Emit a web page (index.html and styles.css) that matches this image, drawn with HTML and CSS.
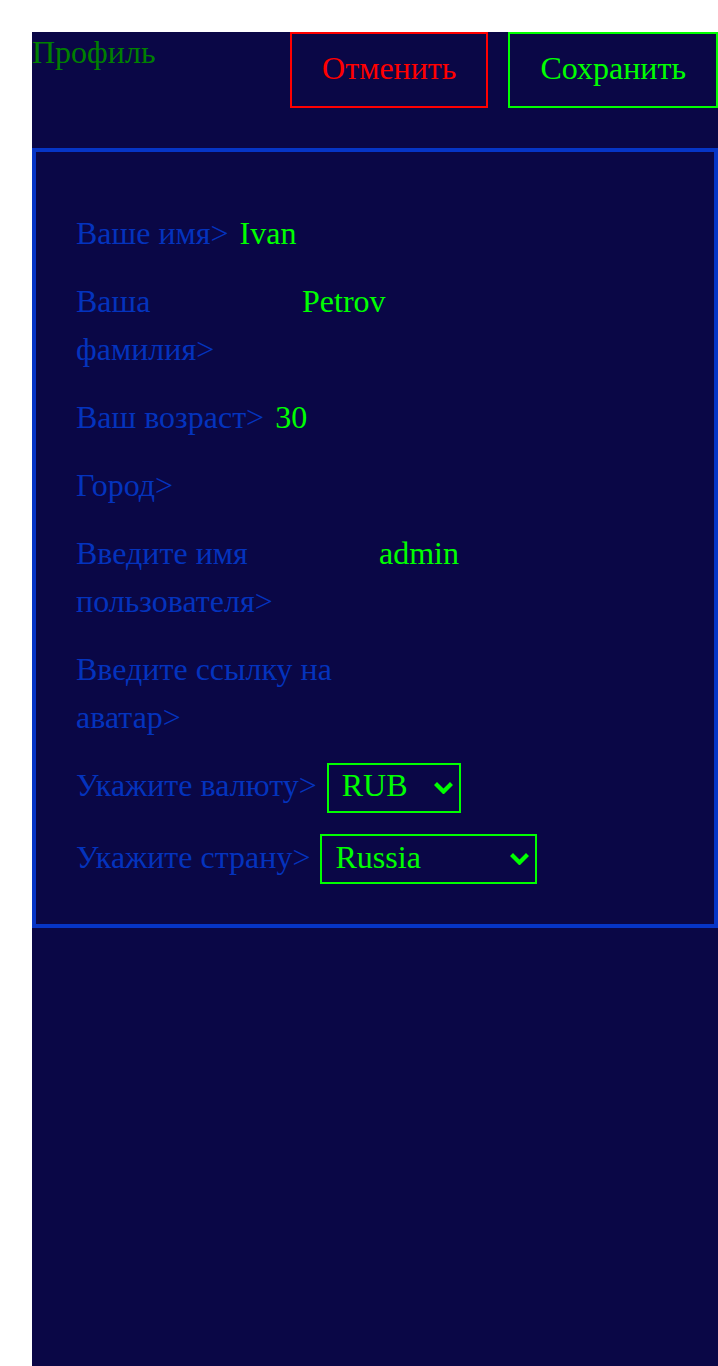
FILE: index.html
```html
<!DOCTYPE html>
<html lang="ru">
<head>
<meta charset="utf-8">
<title>Профиль</title>
<link rel="stylesheet" href="styles.css">
</head>
<body>
<main class="page">
  <header class="header">
    <h1 class="title">Профиль</h1>
    <div class="actions">
      <button class="btn btn-cancel" type="button">Отменить</button>
      <button class="btn btn-save" type="button">Сохранить</button>
    </div>
  </header>
  <section class="card">
    <form class="form">
      <div class="row">
        <label class="label">Ваше имя&gt;</label>
        <input class="value" type="text" value="Ivan">
      </div>
      <div class="row">
        <label class="label label-narrow">Ваша фамилия&gt;</label>
        <input class="value" type="text" value="Petrov">
      </div>
      <div class="row">
        <label class="label">Ваш возраст&gt;</label>
        <input class="value" type="text" value="30">
      </div>
      <div class="row">
        <label class="label">Город&gt;</label>
      </div>
      <div class="row">
        <label class="label label-wide">Введите имя пользователя&gt;</label>
        <input class="value" type="text" value="admin">
      </div>
      <div class="row">
        <label class="label label-wide">Введите ссылку на аватар&gt;</label>
      </div>
      <div class="row row-select">
        <label class="label">Укажите валюту&gt;</label>
        <span class="select-wrap">
          <select class="select select-currency">
            <option>RUB</option>
            <option>USD</option>
            <option>EUR</option>
          </select>
          <svg class="chevron" width="19" height="12" viewBox="0 0 19 12" aria-hidden="true"><polygon points="0,3 3,0 9.5,6.5 16,0 19,3 9.5,12.5"/></svg>
        </span>
      </div>
      <div class="row row-select">
        <label class="label">Укажите страну&gt;</label>
        <span class="select-wrap">
          <select class="select select-country">
            <option>Russia</option>
            <option>Kazakhstan</option>
            <option>Belarus</option>
          </select>
          <svg class="chevron" width="19" height="12" viewBox="0 0 19 12" aria-hidden="true"><polygon points="0,3 3,0 9.5,6.5 16,0 19,3 9.5,12.5"/></svg>
        </span>
      </div>
    </form>
  </section>
</main>
</body>
</html>
```
FILE: styles.css
```css
html, body {
  margin: 0;
  padding: 0;
  background: #ffffff;
}

body {
  font-family: "Liberation Serif", "Times New Roman", serif;
  font-size: 32px;
  overflow: hidden;
}

.page {
  margin: 32px 0 0 32px;
  min-height: calc(100vh - 32px);
  background: #0a0746;
  box-sizing: border-box;
}

.header {
  display: flex;
  justify-content: space-between;
  align-items: flex-start;
  margin-bottom: 40px;
}

.title {
  margin: 0;
  font-size: 32px;
  font-weight: normal;
  color: #008000;
  line-height: 41px;
}

.actions {
  display: flex;
  gap: 20px;
}

.btn {
  font-family: inherit;
  font-size: 32px;
  line-height: 38px;
  padding: 15px 30px 19px;
  background: transparent;
  border: 2px solid;
  margin: 0;
  cursor: pointer;
}

.btn-cancel {
  color: #ff0000;
  border-color: #ff0000;
}

.btn-save {
  color: #00ff00;
  border-color: #00ff00;
}

.card {
  border: 4px solid #0635c6;
  padding: 57px 40px 40px 40px;
}

.form {
  display: flex;
  flex-direction: column;
  gap: 20px;
}

.row {
  display: flex;
  align-items: baseline;
  gap: 11px;
}

.row-select {
  gap: 10px;
}

.label {
  color: #0433bd;
  line-height: 48px;
  flex: none;
}

.label-narrow {
  width: 215px;
}

.label-wide {
  width: 292px;
}

.value {
  flex: 1;
  min-width: 0;
  font-family: inherit;
  font-size: 32px;
  line-height: 48px;
  height: 48px;
  padding: 0;
  border: none;
  background: transparent;
  color: #00ff00;
  outline: none;
}

.select-wrap {
  position: relative;
  display: inline-flex;
}

.select {
  -webkit-appearance: none;
  appearance: none;
  font-family: inherit;
  font-size: 32px;
  line-height: normal;
  color: #00ff00;
  background: transparent;
  border: 2px solid #00ff00;
  border-radius: 0;
  padding: 2px 30px 7px 13px;
  height: 50px;
  margin: 0;
  box-sizing: border-box;
}

.select option {
  color: #000000;
}

.select-currency {
  width: 134px;
}

.select-country {
  width: 217px;
}

.chevron {
  position: absolute;
  right: 8px;
  top: 50%;
  transform: translateY(-50%);
  fill: #00ff00;
  pointer-events: none;
}
```
